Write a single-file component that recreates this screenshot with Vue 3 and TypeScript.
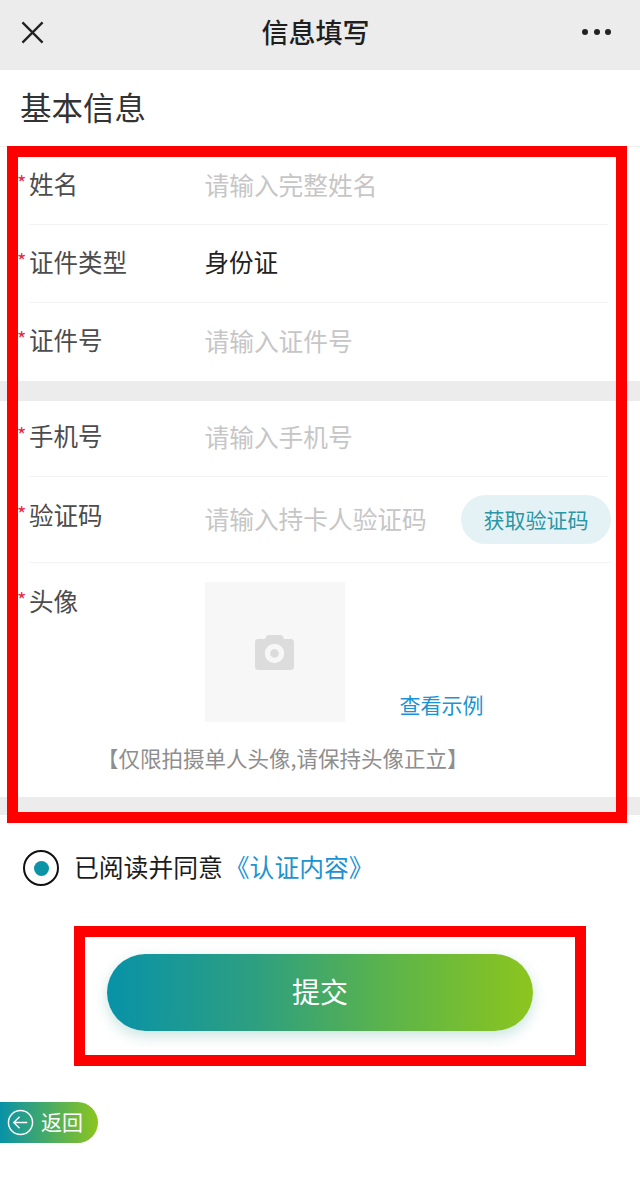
<script setup lang="ts">
const hint = '【仅限拍摄单人头像,请保持头像正立】'
</script>

<template>
  <div class="page">
    <header class="nav">
      <svg class="close" viewBox="0 0 24 24"><path d="M1.500 1.500 22.500 22.500M22.500 1.500 1.500 22.500" /></svg>
      <h1>信息填写</h1>
      <div class="dots"><i></i><i></i><i></i></div>
    </header>
    <div class="section-title">基本信息</div>

    <section class="group first">
      <div class="row r1"><label>姓名</label><span class="ph">请输入完整姓名</span></div>
      <div class="row r2"><label>证件类型</label><span class="val">身份证</span></div>
      <div class="row r3 last"><label>证件号</label><span class="ph">请输入证件号</span></div>
    </section>
    <div class="band b1"></div>
    <section class="group">
      <div class="row r4"><label>手机号</label><span class="ph">请输入手机号</span></div>
      <div class="row r5">
        <label>验证码</label>
        <span class="ph code">请输入持卡人验证码</span>
        <button class="get">获取验证码</button>
      </div>
      <div class="avatar-row">
        <label>头像</label>
        <div class="upload">
          <svg viewBox="0 0 40 36"><path fill-rule="evenodd" d="M11 2.500C11.500 1 12.500 0 14 0h12c1.500 0 2.500 1 3 2.500L30 4h7c1.700 0 3 1.300 3 3v26c0 1.700-1.300 3-3 3H3c-1.700 0-3-1.300-3-3V7c0-1.700 1.300-3 3-3h7zM20 9a10 10 0 1 0 0 20 10 10 0 0 0 0-20zm0 5.500a4.500 4.500 0 1 1 0 9 4.500 4.500 0 0 1 0-9z" /></svg>
        </div>
        <a class="example">查看示例</a>
      </div>
      <p class="hint">{{ hint }}</p>
    </section>
    <div class="band b2"></div>

    <div class="agree">
      <span class="radio"><i></i></span>
      <span>已阅读并同意</span><a>《认证内容》</a>
    </div>
    <div class="submit-wrap"><button class="submit">提交</button></div>
    <button class="back">
      <svg viewBox="0 0 28 28"><circle cx="14" cy="14" r="12.500" /><path d="M21 14H7.500M13 8l-6 6 6 6" /></svg>
      <span>返回</span>
    </button>

    <div class="mark mark-form"></div>
    <div class="mark mark-submit"></div>
  </div>
</template>

<style>
html, body { margin: 0; background: #fff; }
</style>

<style scoped>
.page {
  position: relative;
  width: 640px;
  height: 1183px;
  overflow: hidden;
  background: #fff;
  font-family: "Noto Sans CJK SC", "Noto Sans", sans-serif;
}
.nav {
  height: 70px;
  background: #ececec;
  display: flex;
  align-items: center;
  justify-content: space-between;
  padding: 0 29px 6px 21px;
  box-sizing: border-box;
}
.close { width: 23px; height: 23px; fill: none; stroke: #222; stroke-width: 2.400; }
.nav h1 { margin: 0 0 0 5px; font-size: 27px; font-weight: 500; color: #1f1f1f; line-height: 36px; }
.dots { display: flex; gap: 5.500px; }
.dots i { width: 6px; height: 6px; border-radius: 50%; background: #222; }
.section-title {
  height: 76px;
  box-sizing: border-box;
  padding: 14px 0 0 20px;
  font-size: 31.500px;
  line-height: 44px;
  color: #333;
}
.group.first { border-top: 1px solid #f0f0f0; }
.row {
  position: relative;
  margin: 0 32px 0 29px;
  display: flex;
  align-items: center;
  border-bottom: 1px solid #f3f3f3;
  box-sizing: border-box;
}
.row.last { border-bottom: 0; }
.r1 { height: 78px; padding-bottom: 4px; }
.r2 { height: 78px; padding-bottom: 4px; }
.r3 { height: 78px; padding-bottom: 4px; }
.r4 { height: 76px; padding-bottom: 6px; }
.r5 { height: 86px; padding-bottom: 10px; margin-right: 29px; }
label {
  position: relative;
  width: 175.500px;
  flex: none;
  font-size: 24.500px;
  line-height: 34px;
  color: #4c4c4c;
}
label::before {
  content: "*";
  position: absolute;
  left: -12px;
  top: -1px;
  color: #e6294b;
  font-size: 20px;
}
.ph { font-size: 24.700px; line-height: 34px; color: #c6c6c6; }
.code { flex: 1; padding-top: 6px; }
.val { font-size: 24.500px; line-height: 34px; color: #222; }
.get {
  position: absolute;
  right: 0;
  top: 18px;
  width: 150px;
  height: 49px;
  border: 0;
  padding: 0 0 2px;
  border-radius: 25px;
  background: #e5f2f5;
  color: #2b96a5;
  font: inherit;
  font-size: 21px;
}
.avatar-row {
  display: flex;
  align-items: flex-start;
  margin-left: 29px;
  padding-top: 19px;
  height: 159px;
  box-sizing: border-box;
}
.avatar-row label { margin-top: 2px; }
.upload {
  width: 140px;
  height: 140px;
  background: #f7f7f8;
  display: flex;
  align-items: center;
  justify-content: center;
}
.upload svg { width: 39px; height: 35px; fill: #dcdcdc; }
.example {
  align-self: flex-end;
  margin: 0 0 3px 55px;
  font-size: 21px;
  line-height: 30px;
  color: #1c93d2;
}
.hint {
  margin: 0;
  padding-top: 19px;
  height: 75px;
  box-sizing: border-box;
  padding-left: 97px;
  font-size: 21.500px;
  line-height: 34px;
  color: #8e8e8e;
  white-space: nowrap;
}
.band { background: #ececec; }
.b1 { height: 20px; }
.b2 { height: 18px; }
.agree {
  display: flex;
  align-items: center;
  height: 36px;
  margin-top: 35px;
  padding-left: 23px;
  font-size: 24.800px;
  line-height: 32px;
  color: #1c1c1c;
}
.agree span:not(.radio) { padding-bottom: 4px; }
.agree a { color: #1c93d2; padding-bottom: 4px; margin-left: 2px; }
.radio {
  width: 36px;
  height: 36px;
  box-sizing: border-box;
  border: 2px solid #111;
  border-radius: 50%;
  margin-right: 15px;
  display: flex;
  align-items: center;
  justify-content: center;
}
.radio i { width: 15px; height: 15px; border-radius: 50%; background: #0c93a6; }
.submit-wrap { display: flex; justify-content: center; margin-top: 68px; }
.submit {
  width: 426px;
  height: 77px;
  border: 0;
  padding: 0 0 3px;
  border-radius: 39px;
  background: linear-gradient(90deg, #0892a8, #2e9f80 35%, #5fb548 68%, #8cc51e);
  box-shadow: 0 5px 14px rgba(40, 150, 130, 0.25);
  color: #fff;
  font: inherit;
  font-size: 28px;
}
.back {
  display: flex;
  align-items: center;
  gap: 7px;
  width: 98px;
  height: 41px;
  margin-top: 71px;
  padding: 0 0 0 7px;
  box-sizing: border-box;
  border: 0;
  border-radius: 0 21px 21px 0;
  background: linear-gradient(90deg, #0892a8, #8cc51e);
  color: #fff;
  font: inherit;
  font-size: 21px;
}
.back span { padding-bottom: 4px; }
.back svg { width: 27px; height: 27px; fill: none; stroke: #fff; stroke-width: 1.500; flex: none; }
.mark { position: absolute; border-style: solid; border-color: #f00; box-sizing: border-box; pointer-events: none; }
.mark-form { left: 7px; top: 146px; width: 620px; height: 677px; border-width: 11px; }
.mark-submit { left: 74px; top: 926px; width: 512px; height: 140px; border-width: 11px; }
</style>
